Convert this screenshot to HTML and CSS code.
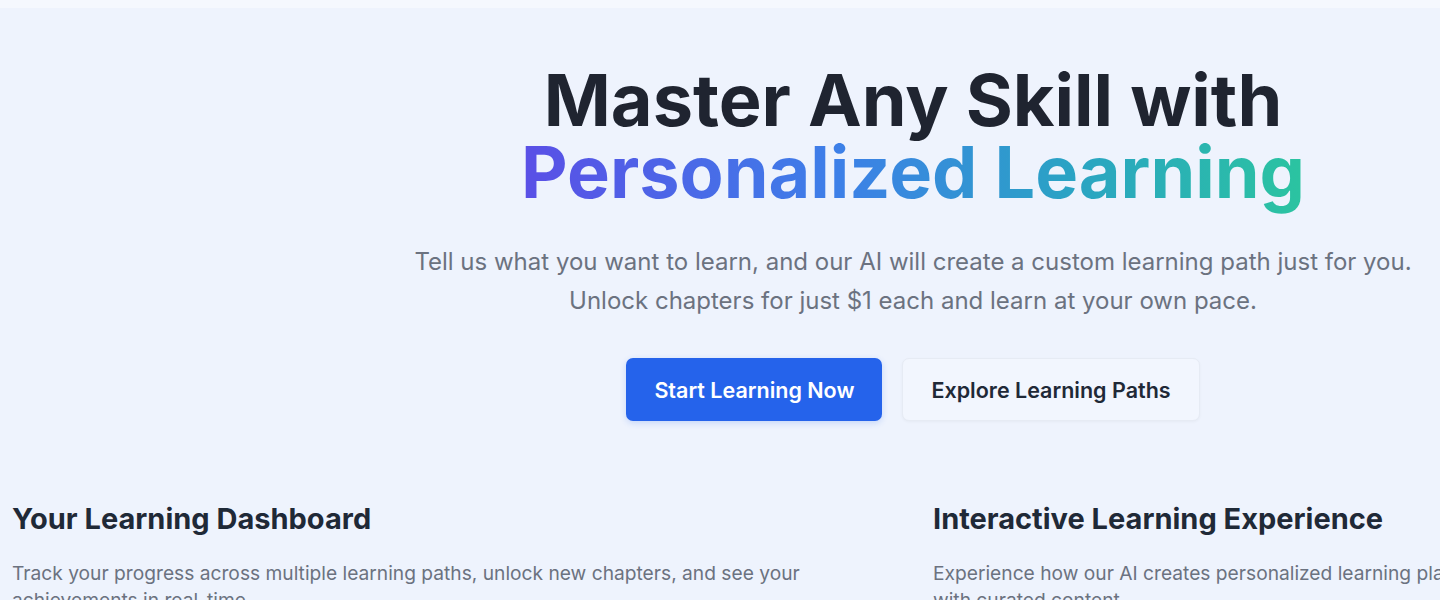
FILE: index.html
```html
<!DOCTYPE html>
<html lang="en">
<head>
    <meta charset="UTF-8">
    <meta name="viewport" content="width=device-width, initial-scale=1.0">
    <title>Personalized Learning</title>
    <link rel="stylesheet" href="styles.css">
</head>
<body>

    <div class="page">
        <div class="top-strip"></div>

        <!-- Hero -->
        <section class="hero">
            <h1 class="hero-title">
                Master Any Skill with<br>
                <span class="gradient-text">Personalized Learning</span>
            </h1>
            <p class="hero-subtitle">
                Tell us what you want to learn, and our AI will create a custom learning path just for you.<br>
                Unlock chapters for just $1 each and learn at your own pace.
            </p>
            <div class="hero-actions">
                <a href="#" class="btn btn-primary">Start Learning Now</a>
                <a href="#" class="btn btn-outline">Explore Learning Paths</a>
            </div>
        </section>

        <!-- Feature previews -->
        <section class="features">
            <div class="feature">
                <h2>Your Learning Dashboard</h2>
                <p>Track your progress across multiple learning paths, unlock new chapters, and see your achievements in real-time.</p>
            </div>
            <div class="feature">
                <h2>Interactive Learning Experience</h2>
                <p>Experience how our AI creates personalized learning plans and interactive lessons, complete with curated content.</p>
            </div>
        </section>
    </div>

</body>
</html>
```

FILE: styles.css
```css
html, body {
    margin: 0;
    padding: 0;
    overflow: hidden;
}
body {
    font-family: Inter, 'Noto Sans', sans-serif;
    background-color: #eef3fd;
    color: #1f2937;
}
.page {
    width: 1826px;
}
.top-strip {
    height: 8px;
    background-color: #f5f8fe;
}

/* Hero */
.hero {
    text-align: center;
    padding-top: 56px;
}
.hero-title {
    margin: 0;
    font-size: 72px;
    font-weight: 700;
    line-height: 1.0;
    color: #1f2430;
}
.gradient-text {
    background: linear-gradient(90deg, #5a4fe6 0%, #3d7fe8 40%, #2aa3c4 70%, #2bc4a0 100%);
    -webkit-background-clip: text;
    background-clip: text;
    color: transparent;
}
.hero-subtitle {
    margin: 34px 0 0;
    font-size: 24px;
    line-height: 39px;
    color: #6b7280;
}
.hero-actions {
    display: flex;
    justify-content: center;
    gap: 20px;
    margin-top: 38px;
}
.btn {
    display: inline-flex;
    align-items: center;
    justify-content: center;
    height: 63px;
    padding: 0 28px;
    border-radius: 7px;
    font-size: 21.5px;
    font-weight: 600;
    text-decoration: none;
    box-sizing: border-box;
}
.btn-primary {
    background-color: #2563eb;
    color: #fff;
    box-shadow: 0 2px 6px rgba(37, 99, 235, 0.2);
}
.btn-outline {
    background-color: #f2f6fe;
    color: #1f2937;
    border: 1px solid #e6ebf4;
    box-shadow: 0 1px 3px rgba(0, 0, 0, 0.04);
}

/* Feature previews */
.features {
    display: grid;
    grid-template-columns: 1fr 1fr;
    gap: 40px;
    padding: 0 12px;
    margin-top: 80px;
}
.feature h2 {
    margin: 0;
    font-size: 29px;
    font-weight: 700;
    color: #1f2937;
}
.feature p {
    margin: 24px 0 0;
    font-size: 19.2px;
    line-height: 27px;
    color: #6b7280;
}
```
